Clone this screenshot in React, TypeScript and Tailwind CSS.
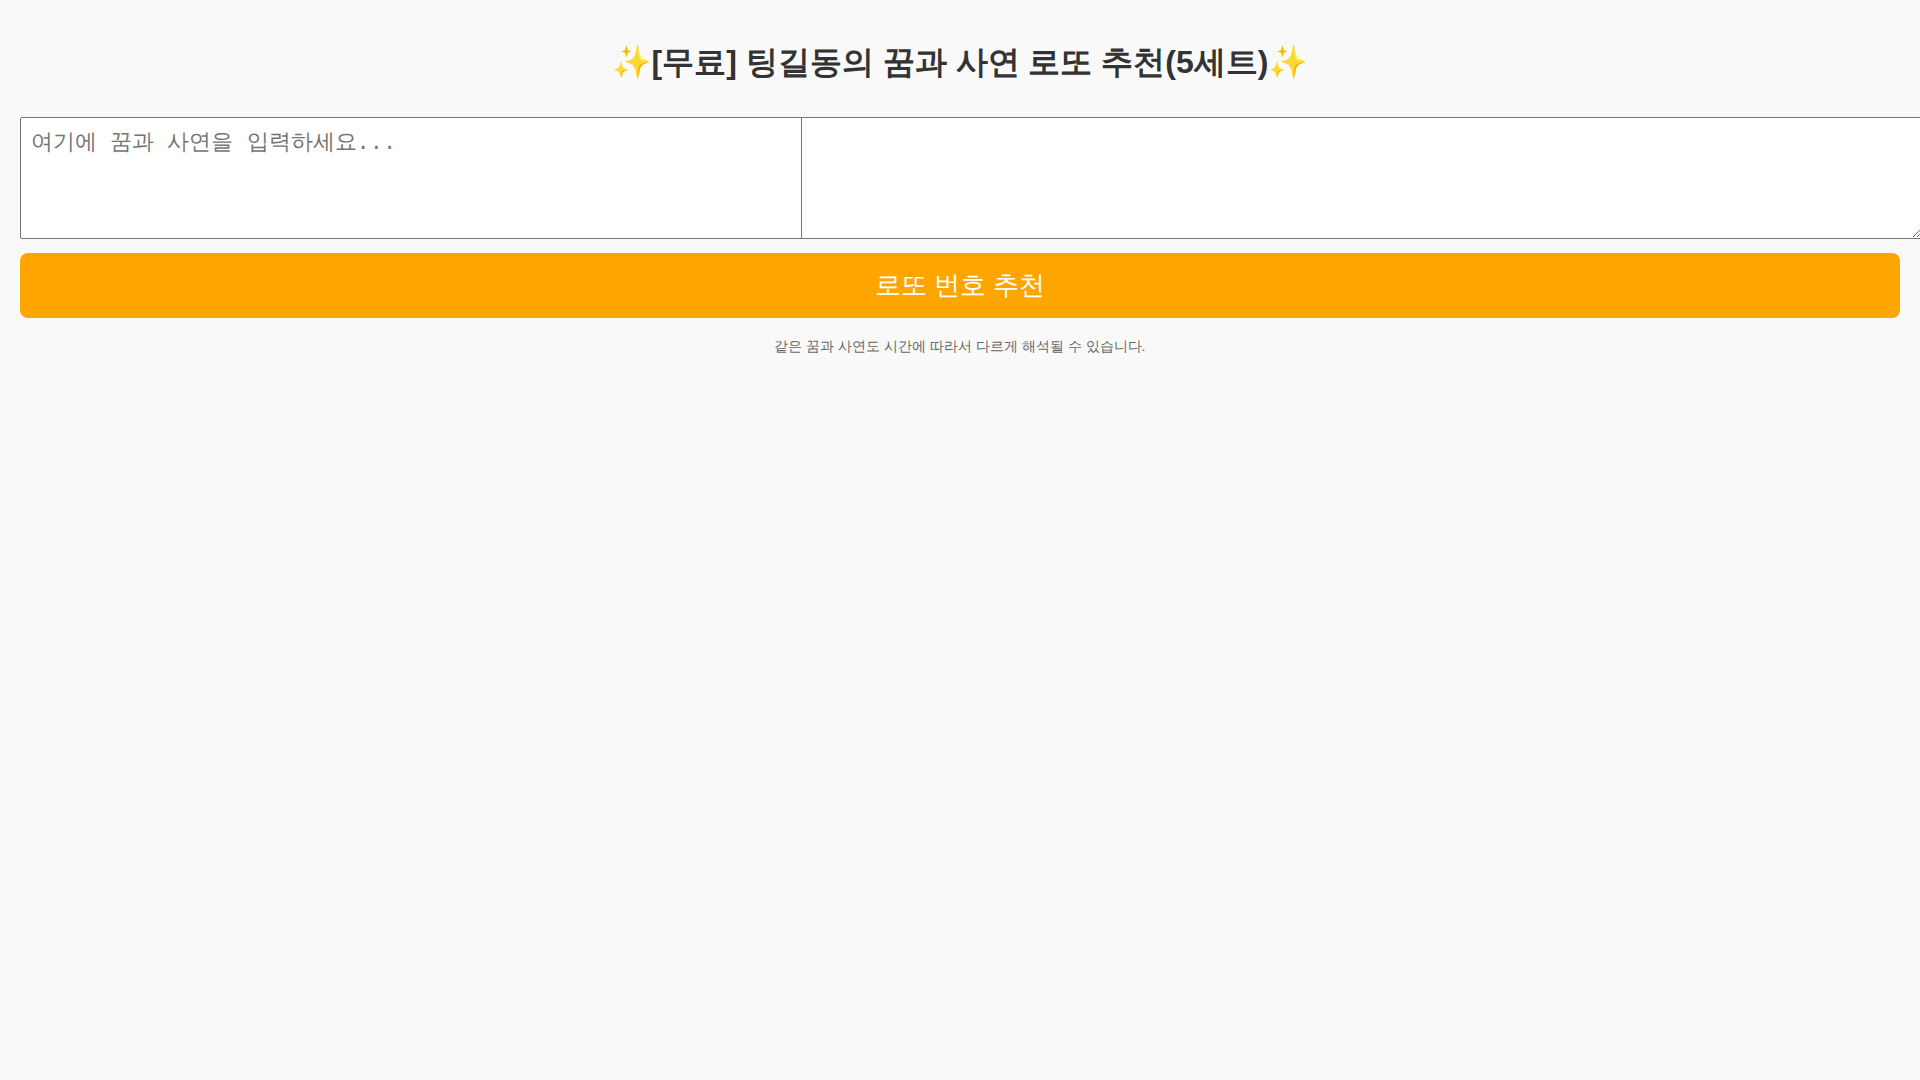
export default function App() {
  return (
    <main className="min-h-screen overflow-x-hidden bg-[#f9f9f9] p-5 text-center font-['Liberation_Sans',sans-serif] text-[#333]">
      <h1 className="mt-5 mb-8 text-[32px] leading-[45px] font-bold">
        ✨[무료] 팅길동의 꿈과 사연 로또 추천(5세트)✨
      </h1>

      {/* Dream input, runs past the page edge */}
      <div className="relative">
        <textarea
          aria-label="꿈과 사연"
          placeholder="여기에 꿈과 사연을 입력하세요..."
          className="box-content block h-[100px] w-full rounded-xs border border-[#767676] bg-white p-[10px] font-['Liberation_Mono',monospace] text-[22px] leading-8 placeholder:text-[#757575]"
        />
        <span className="absolute inset-y-0 left-[781px] w-px bg-[#767676]" />
      </div>

      <button className="mt-[14px] h-[65px] w-full rounded-lg bg-[#ffa500] text-[26px] text-white">
        로또 번호 추천
      </button>

      <p className="mt-[18px] text-[14px] leading-5 text-[#666]">
        같은 꿈과 사연도 시간에 따라서 다르게 해석될 수 있습니다.
      </p>
    </main>
  );
}
